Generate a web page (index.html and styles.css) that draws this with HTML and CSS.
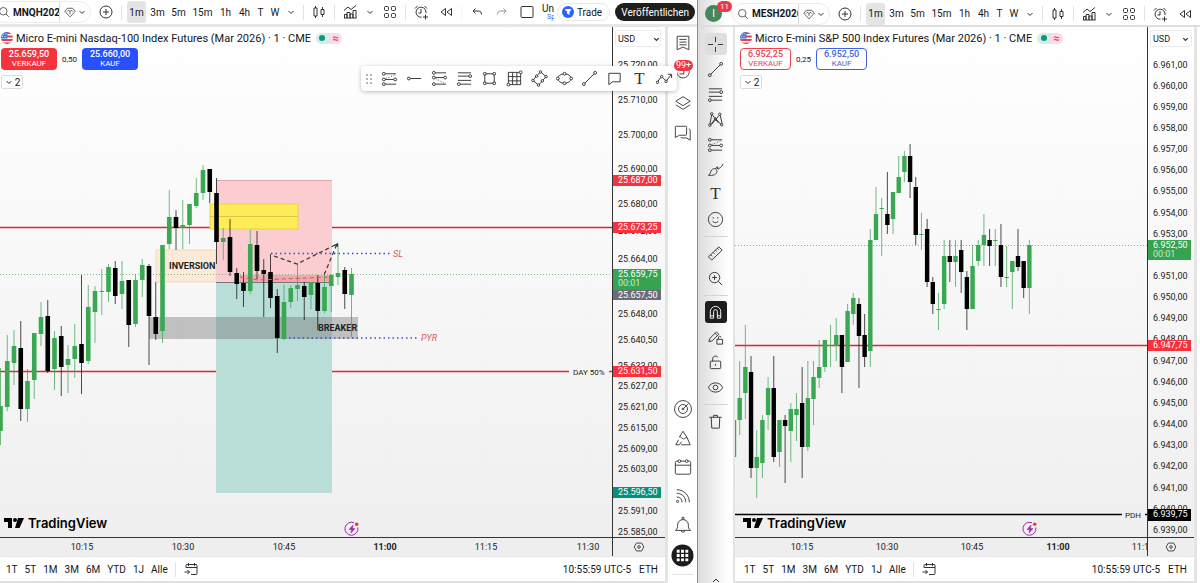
FILE: index.html
```
<!DOCTYPE html>
<html lang="de">
<head>
    <meta charset="UTF-8">
    <meta name="viewport" content="width=device-width, initial-scale=1.0">
    <title>MNQH2026 / MESH2026</title>
    <link rel="stylesheet" href="styles.css">
</head>
<body>
    <svg class="sprite" aria-hidden="true">
        <symbol id="i-search" viewBox="0 0 16 16"><circle cx="7" cy="7" r="5"/><path d="M10.5 10.5 14.500 14.500"/></symbol>
        <symbol id="i-gem" viewBox="0 0 16 16"><path d="M4.5 3h7L15 7 8 14.500 1 7zM4 7.5c1-2 3-2 4 0 1-2 3-2 4 0M8 7.5v3"/></symbol>
        <symbol id="i-chevron" viewBox="0 0 10 10"><path d="M2.500 4 5 6.500 7.500 4"/></symbol>
        <symbol id="i-plus" viewBox="0 0 16 16"><circle cx="8" cy="8" r="6"/><path d="M8 5v6M5 8h6"/></symbol>
        <symbol id="i-candles" viewBox="0 0 16 16"><path d="M4.5 2v2M4.5 12v2M3 4h3v8H3zM11.5 3v2.500M11.500 10.500V13M10 5.500h3v5h-3z"/></symbol>
        <symbol id="i-indicator" viewBox="0 0 16 16"><path d="M2 6.500 6 3l3 2.500L14 1.500M2.500 14v-3.500H5V14M5 14V8.500h3V14M8 14v-4h3v4M11 14V6.500h3V14M2 14h12.500"/></symbol>
        <symbol id="i-grid" viewBox="0 0 16 16"><rect x="2.500" y="2.500" width="4" height="4" rx="1"/><rect x="9.500" y="2.500" width="4" height="4" rx="1"/><rect x="2.500" y="9.500" width="4" height="4" rx="1"/><rect x="9.500" y="9.500" width="4" height="4" rx="1"/></symbol>
        <symbol id="i-alarm" viewBox="0 0 16 16"><path d="M13 9A5 5 0 1 0 8.500 13.200M8 5v4H5.500M2 4.500 4.500 2M11.500 2 14 4.500M12.500 10.500v5M10 13h5"/></symbol>
        <symbol id="i-rewind" viewBox="0 0 16 16"><path d="M7.500 4.500v7L3 8zM13.500 4.500v7L9 8z"/></symbol>
        <symbol id="i-undo" viewBox="0 0 16 16"><path d="M6.500 4.500 4 7l2.500 2.500M4 7h5c3 0 3.500 1.500 3.500 3.500"/></symbol>
        <symbol id="i-redo" viewBox="0 0 16 16"><path d="M9.500 4.500 12 7l-2.500 2.500M12 7H7c-3 0-3.500 1.500-3.500 3.500"/></symbol>
        <symbol id="i-square" viewBox="0 0 16 16"><rect x="2" y="2.500" width="12" height="11" rx="1"/></symbol>
        <symbol id="i-goto" viewBox="0 0 16 16"><path d="M3 6.500V4.500a1 1 0 0 1 1-1h9a1 1 0 0 1 1 1v8a1 1 0 0 1-1 1H8M3 6.500h11M5.500 2v3M11.500 2v3M1.500 11h5M4.500 9l2 2-2 2"/></symbol>
        <symbol id="i-hex" viewBox="0 0 16 16"><path d="M5 3.500h6L13.500 8 11 12.500H5L2.500 8z"/><circle cx="8" cy="8" r="1.500"/></symbol>

        <symbol id="i-line" viewBox="0 0 18 18"><path d="M4 14 14 4"/><circle cx="3" cy="15" r="1.500"/><circle cx="15" cy="3" r="1.500"/></symbol>
        <symbol id="i-hray" viewBox="0 0 18 18"><path d="M4.500 9H16"/><circle cx="3" cy="9" r="1.500"/></symbol>
        <symbol id="i-position" viewBox="0 0 18 18"><path d="M4.500 4H16M4.500 10h9M4.500 15H16"/><path stroke-dasharray="1 2" d="M5 9l10-4"/><circle cx="3" cy="4" r="1.500"/><circle cx="15" cy="10" r="1.500"/><circle cx="3" cy="10" r="1.500"/><circle cx="3" cy="15" r="1.500"/></symbol>
        <symbol id="i-forecast" viewBox="0 0 18 18"><path d="M4.500 3H16M4.500 8h9M4.500 15H16"/><path stroke-dasharray="1 2" d="M5 9l9 5"/><circle cx="3" cy="3" r="1.500"/><circle cx="3" cy="8" r="1.500"/><circle cx="15" cy="8" r="1.500"/><circle cx="3" cy="15" r="1.500"/></symbol>
        <symbol id="i-fib" viewBox="0 0 18 18"><path d="M2 3h14M2 6.500h11.500M2 11h14M4.500 15H16"/><circle cx="15" cy="6.500" r="1.500"/><circle cx="3" cy="15" r="1.500"/></symbol>
        <symbol id="i-rect" viewBox="0 0 18 18"><path d="M5 4h8M5 14h8M4 5v8M14 5v8"/><circle cx="4" cy="4" r="1.500"/><circle cx="14" cy="4" r="1.500"/><circle cx="4" cy="14" r="1.500"/><circle cx="14" cy="14" r="1.500"/></symbol>
        <symbol id="i-mesh" viewBox="0 0 18 18"><path d="M2.500 2.500h13v13h-13zM7 2.500v13M11.500 2.500v13M2.500 7h13M2.500 11.500h13"/><circle class="knob" cx="15.500" cy="2.500" r="1.500"/><circle class="knob" cx="2.500" cy="15.500" r="1.500"/></symbol>
        <symbol id="i-rotrect" viewBox="0 0 18 18"><path d="M2 11 10 2 16 7 8 16z"/><circle class="knob" cx="2" cy="11" r="1.300"/><circle class="knob" cx="10" cy="2" r="1.300"/><circle class="knob" cx="16" cy="7" r="1.300"/><circle class="knob" cx="8" cy="16" r="1.300"/><circle class="knob" cx="6" cy="6.500" r="1.300"/><circle class="knob" cx="12" cy="11.500" r="1.300"/></symbol>
        <symbol id="i-ellipse" viewBox="0 0 18 18"><ellipse cx="9" cy="9" rx="7" ry="5"/><circle class="knob" cx="2" cy="9" r="1.500"/><circle class="knob" cx="16" cy="9" r="1.500"/><circle class="knob" cx="9" cy="4" r="1.500"/><circle class="knob" cx="9" cy="14" r="1.500"/></symbol>
        <symbol id="i-callout" viewBox="0 0 18 18"><path d="M3 3.500h12v9H7l-4 3z"/></symbol>
        <symbol id="i-path" viewBox="0 0 18 18"><path d="M2 12 5 8M7 8l3 3M11.500 11 16 5M12.500 4.500H16.500V8.500"/><circle cx="1.500" cy="13" r="1.300"/><circle cx="6" cy="7" r="1.300"/><circle cx="10.700" cy="12" r="1.300"/></symbol>

        <symbol id="i-cross" viewBox="0 0 18 18"><path d="M9 1v5.500M9 11.500V17M1 9h5.500M11.500 9H17"/></symbol>
        <symbol id="i-pattern" viewBox="0 0 18 18"><path d="M3 14 5 4M6 4.500l6 8M5 14l8-9.500M14 4.500l2 9M4 14.500 8 9M10 9l5 5.500"/><circle cx="3" cy="15" r="1.300"/><circle cx="5" cy="3" r="1.300"/><circle cx="9" cy="8.500" r="1.300"/><circle cx="13.500" cy="3.500" r="1.300"/><circle cx="15.500" cy="14.500" r="1.300"/></symbol>
        <symbol id="i-brush" viewBox="0 0 18 18"><path d="M1.500 15c2 0 1.500-3 3.500-5.500s5.500-1.500 5.500 1.500-4 5-9 4zM9 8.500 11 6c0 3 4 2 6-3M10 7l2.500 2"/></symbol>
        <symbol id="i-smile" viewBox="0 0 18 18"><circle cx="9" cy="9" r="7.500"/><path d="M6 10.500c1 2.500 5 2.500 6 0M6.500 6.500v1.500M11.500 6.500v1.500"/></symbol>
        <symbol id="i-ruler" viewBox="0 0 18 18"><path d="M1.500 12.500 12.500 2l3.500 3.500L5 16zM4 10.500l1.500 1.500M6.500 8l1.500 1.500M9 5.500 10.500 7M11 3.500l1.500 1.500"/></symbol>
        <symbol id="i-zoom" viewBox="0 0 18 18"><circle cx="8" cy="8" r="5.500"/><path d="M12 12l4 4M8 5.500v5M5.500 8h5"/></symbol>
        <symbol id="i-magnet" viewBox="0 0 18 18"><path d="M3.500 15V8a5.500 5.500 0 0 1 11 0v7h-3.500V8a2 2 0 0 0-4 0v7zM3.500 12.500H7M11 12.500h3.500"/></symbol>
        <symbol id="i-penlock" viewBox="0 0 18 18"><path d="M2 13.500 3 10l7-7 2.500 2.500-7 7zM8.500 4.500 11 7M10.500 11h6v5h-6zM12 11V9.500a1.500 1.500 0 0 1 3-.5"/></symbol>
        <symbol id="i-lock" viewBox="0 0 18 18"><rect x="3.500" y="7.500" width="11" height="8" rx="1"/><path d="M6 7.500V5a3 3 0 0 1 5.500-1.500M9 10.500v2"/></symbol>
        <symbol id="i-eye" viewBox="0 0 18 18"><path d="M1.500 9C4 2.500 14 2.500 16.500 9 14 15.500 4 15.500 1.500 9z"/><circle cx="9" cy="9" r="2.500"/></symbol>
        <symbol id="i-trash" viewBox="0 0 18 18"><path d="M2.500 4.500h13M4.500 4.500l.5 11.500h8l.5-11.500M7 4.500V2.500h4v2"/></symbol>
        <symbol id="i-up" viewBox="0 0 10 10"><path d="M2 6.500 5 3.500 8 6.500"/></symbol>

        <symbol id="i-watchlist" viewBox="0 0 20 20"><path d="M3.500 2.500h13v15L10 14.500l-6.500 3zM6 6h8M6 9h8M6 12h8"/></symbol>
        <symbol id="i-clock" viewBox="0 0 20 20"><path d="M3 9a7 7 0 1 0 14-1M11 5v6H6"/></symbol>
        <symbol id="i-layers" viewBox="0 0 20 20"><path d="M10 3l8 5-8 5-8-5zM2 12l8 5 8-5"/></symbol>
        <symbol id="i-chat" viewBox="0 0 20 20"><path d="M3 2.500h10a1 1 0 0 1 1 1v8a1 1 0 0 1-1 1H6l-4.500 2.500V3.500A1 1 0 0 1 3 2.500zM16.500 5.500a1.500 1.500 0 0 1 1.500 1.500v11L14 15.500H9a1.500 1.500 0 0 1-1.500-1"/></symbol>
        <symbol id="i-radar" viewBox="0 0 20 20"><circle cx="10" cy="10" r="9.400"/><circle cx="10" cy="10" r="5"/><circle cx="10" cy="10" r="1"/><path d="M10 10l6-6"/></symbol>
        <symbol id="i-ideas" viewBox="0 0 20 20"><path d="M6 9 10 2.500 14.500 9.500M6 9c2-1 3 2 4.500 2s2-1.500 4-1.500L18 17.500H8M5 12 2 17.500h4L8.500 14"/></symbol>
        <symbol id="i-calendar" viewBox="0 0 20 20"><rect x="1.500" y="3.500" width="17" height="14.500" rx="1.500"/><path d="M1.500 8h17"/><circle class="knob" cx="6" cy="3.500" r="1.500"/><circle class="knob" cx="14" cy="3.500" r="1.500"/></symbol>
        <symbol id="i-feed" viewBox="0 0 20 20"><circle cx="4" cy="16" r="1.200"/><path d="M3 11c3.500 0 6 2.500 6 6M3 7c6 0 10 4 10 10M3 3c8 0 14 6 14 14"/></symbol>
        <symbol id="i-bell" viewBox="0 0 20 20"><path d="M1.500 16c2.500-1.500 2.500-3.500 2.500-6a6 6 0 0 1 12 0c0 2.500 0 4.500 2.500 6zM8 16a2 2 0 0 0 4 0M9 4V1.500h2V4"/></symbol>
        <symbol id="i-flag" viewBox="0 0 12 12"><clipPath id="flagclip"><circle cx="6" cy="6" r="6"/></clipPath><g clip-path="url(#flagclip)" stroke="none"><path fill="#fff" d="M0 0h12v12H0z"/><path fill="#e0434f" d="M0 0h12v2H0zM0 3.500h12v2H0zM0 7h12v2H0zM0 10.500h12V12H0z"/><path fill="#3f7fe0" d="M0 0h6.500v6.500H0z"/><path fill="#cfe0fa" d="M2 1.500h1v1H2zM4.500 1.500h1v1h-1zM1 4h1v1H1zM3.500 4h1v1h-1z"/></g></symbol>
        <symbol id="i-logo" viewBox="0 0 20 12"><path fill="#000" stroke="none" d="M0 1h8v10H4V5H0zM14 1h6l-4.500 10H11z"/><circle fill="#000" stroke="none" cx="11" cy="3" r="2"/></symbol>
        <symbol id="i-flash" viewBox="0 0 16 16"><path d="M13.800 6.500A6.500 6.500 0 1 1 10 1.800"/><path fill="#9c27b0" stroke-width=".5" d="M9 4 5 8.500h2.500L7 12l4-4.500H8.500z"/><circle fill="#f23645" stroke="none" cx="12.700" cy="3.300" r="1.800"/></symbol>
    </svg>

    <div class="desktop">
        <!-- Nasdaq window -->
        <section class="window window-nq">
            <header class="topbar">
                <div class="symbol-search">
                    <button class="symbol"><svg><use href="#i-search"/></svg><span>MNQH2026</span></button>
                    <button class="symbol-menu" aria-label="Symbolliste"><svg><use href="#i-gem"/></svg><svg class="chev"><use href="#i-chevron"/></svg></button>
                </div>
                <button class="icon-btn" aria-label="Vergleichen"><svg><use href="#i-plus"/></svg></button>
                <span class="divider"></span>
                <nav class="intervals">
                    <button class="active">1m</button><button>3m</button><button>5m</button><button class="wide">15m</button><button class="hour">1h</button><button class="hour">4h</button><button class="day">T</button><button class="week">W</button>
                    <button class="week" aria-label="Mehr Intervalle"><svg class="chev"><use href="#i-chevron"/></svg></button>
                </nav>
                <span class="divider"></span>
                <button class="icon-btn" aria-label="Charttyp"><svg><use href="#i-candles"/></svg></button>
                <span class="divider"></span>
                <button class="icon-btn" aria-label="Indikatoren"><svg><use href="#i-indicator"/></svg></button>
                <button class="chev-btn" aria-label="Favoriten"><svg class="chev"><use href="#i-chevron"/></svg></button>
                <button class="icon-btn" aria-label="Vorlagen"><svg><use href="#i-grid"/></svg></button>
                <span class="divider"></span>
                <button class="icon-btn" aria-label="Alarm"><svg><use href="#i-alarm"/></svg></button>
                <button class="icon-btn" aria-label="Replay"><svg><use href="#i-rewind"/></svg></button>
                <span class="divider faint"></span>
                <button class="icon-btn" aria-label="Rückgängig"><svg><use href="#i-undo"/></svg></button>
                <button class="icon-btn muted" aria-label="Wiederholen"><svg><use href="#i-redo"/></svg></button>
                <button class="icon-btn" aria-label="Layout"><svg><use href="#i-square"/></svg></button>
                <button class="layout-name"><span>Unbenannt</span><small>Speichern</small></button>
                <button class="trade"><svg viewBox="0 0 12 12"><circle cx="6" cy="6" r="6" fill="#2962ff"/><path fill="#fff" d="M2.500 3.500 5 3h4.500L8 5.500H7.500V9L5 7.500V5.500z"/></svg>Trade</button>
                <button class="publish">Veröffentlichen</button>
            </header>

            <div class="workspace">
                <div class="chart-pane">
                    <div class="chart">
                        <svg class="plot" id="plot-nq"></svg>
                        <div class="legend">
                            <div class="title"><svg class="flag"><use href="#i-flag"/></svg><span>Micro E-mini Nasdaq-100 Index Futures (Mar 2026) · 1 · CME</span><span class="status"><i></i><b>≈</b></span></div>
                            <div class="orders">
                                <button class="order sell solid"><b>25.659,50</b>VERKAUF</button>
                                <span>0,50</span>
                                <button class="order buy solid"><b>25.660,00</b>KAUF</button>
                            </div>
                            <button class="collapse"><svg class="chev"><use href="#i-chevron"/></svg>2</button>
                        </div>
                        <div class="brand"><svg><use href="#i-logo"/></svg>TradingView</div>
                        <svg class="flash"><use href="#i-flash"/></svg>
                    </div>
                    <div class="scale">
                        <svg class="plot" id="scale-nq"></svg>
                        <select class="currency" aria-label="Währung"><option>USD</option></select>
                        <svg class="chev select-chev"><use href="#i-chevron"/></svg>
                    </div>
                    <svg class="time" id="time-nq"></svg>
                    <div class="corner"><button aria-label="Einstellungen"><svg><use href="#i-hex"/></svg></button></div>
                    <footer class="ranges">
                        <button>1T</button><button>5T</button><button>1M</button><button>3M</button><button>6M</button><button>YTD</button><button>1J</button><button>Alle</button>
                        <span class="divider"></span>
                        <button aria-label="Gehe zu"><svg><use href="#i-goto"/></svg></button>
                        <button class="clock">10:55:59 UTC-5</button>
                        <button>ETH</button>
                    </footer>
                </div>
                <aside class="sidebar">
                    <button aria-label="Watchlist"><svg><use href="#i-watchlist"/></svg></button>
                    <button class="alerts" aria-label="Alarme"><svg><use href="#i-clock"/></svg><span class="badge">99+</span></button>
                    <button aria-label="Objektbaum"><svg><use href="#i-layers"/></svg></button>
                    <button aria-label="Chats"><svg><use href="#i-chat"/></svg></button>
                    <button class="push" aria-label="Screener"><svg><use href="#i-radar"/></svg></button>
                    <button aria-label="Ideen"><svg><use href="#i-ideas"/></svg></button>
                    <button aria-label="Kalender"><svg><use href="#i-calendar"/></svg></button>
                    <button aria-label="News"><svg><use href="#i-feed"/></svg></button>
                    <button aria-label="Mitteilungen"><svg><use href="#i-bell"/></svg></button>
                    <button class="apps" aria-label="Produkte"><svg viewBox="0 0 24 24"><circle cx="12" cy="12" r="11.500" fill="#1c1c1c" stroke="none"/><path fill="#fff" stroke="none" d="M6 6h3v3H6zM10.500 6h3v3h-3zM15 6h3v3h-3zM6 10.500h3v3H6zM10.500 10.500h3v3h-3zM15 10.500h3v3h-3zM6 15h3v3H6zM10.500 15h3v3h-3zM15 15h3v3h-3z"/></svg></button>
                    <hr>
                </aside>
            </div>

            <div class="drawbar">
                <svg class="grip" viewBox="0 0 6 10"><path stroke="none" fill="#b5b5b5" d="M0 0h2v2H0zM4 0h2v2H4zM0 4h2v2H0zM4 4h2v2H4zM0 8h2v2H0zM4 8h2v2H4z"/></svg>
                <button aria-label="Long-Position"><svg><use href="#i-position"/></svg></button>
                <button aria-label="Horizontaler Strahl"><svg><use href="#i-hray"/></svg></button>
                <button aria-label="Short-Position"><svg><use href="#i-forecast"/></svg></button>
                <button aria-label="Fibonacci"><svg><use href="#i-fib"/></svg></button>
                <button aria-label="Rechteck"><svg><use href="#i-rect"/></svg></button>
                <button aria-label="Gann-Box"><svg><use href="#i-mesh"/></svg></button>
                <button aria-label="Gedrehtes Rechteck"><svg><use href="#i-rotrect"/></svg></button>
                <button aria-label="Ellipse"><svg><use href="#i-ellipse"/></svg></button>
                <button aria-label="Trendlinie"><svg><use href="#i-line"/></svg></button>
                <button aria-label="Callout"><svg><use href="#i-callout"/></svg></button>
                <button class="text-tool">T</button>
                <button aria-label="Pfad"><svg><use href="#i-path"/></svg></button>
            </div>
        </section>

        <!-- S&P window -->
        <section class="window window-es">
            <header class="topbar">
                <button class="avatar">I<span class="badge">11</span></button>
                <div class="symbol-search">
                    <button class="symbol"><svg><use href="#i-search"/></svg><span>MESH2026</span></button>
                    <button class="symbol-menu" aria-label="Symbolliste"><svg><use href="#i-gem"/></svg><svg class="chev"><use href="#i-chevron"/></svg></button>
                </div>
                <button class="icon-btn" aria-label="Vergleichen"><svg><use href="#i-plus"/></svg></button>
                <span class="divider"></span>
                <nav class="intervals">
                    <button class="active">1m</button><button>3m</button><button>5m</button><button class="wide">15m</button><button class="hour">1h</button><button class="hour">4h</button><button class="day">T</button><button class="week">W</button>
                    <button class="week" aria-label="Mehr Intervalle"><svg class="chev"><use href="#i-chevron"/></svg></button>
                </nav>
                <span class="divider"></span>
                <button class="icon-btn" aria-label="Charttyp"><svg><use href="#i-candles"/></svg></button>
                <span class="divider"></span>
                <button class="icon-btn" aria-label="Indikatoren"><svg><use href="#i-indicator"/></svg></button>
                <button class="chev-btn" aria-label="Favoriten"><svg class="chev"><use href="#i-chevron"/></svg></button>
                <button class="icon-btn" aria-label="Vorlagen"><svg><use href="#i-grid"/></svg></button>
                <span class="divider"></span>
                <button class="icon-btn" aria-label="Alarm"><svg><use href="#i-alarm"/></svg></button>
                <button class="icon-btn" aria-label="Replay"><svg><use href="#i-rewind"/></svg></button>
            </header>

            <div class="workspace">
                <aside class="tools">
                    <button class="selected" aria-label="Fadenkreuz"><svg><use href="#i-cross"/></svg></button>
                    <button aria-label="Trendlinie"><svg><use href="#i-line"/></svg></button>
                    <button aria-label="Fibonacci"><svg><use href="#i-fib"/></svg></button>
                    <button aria-label="Muster"><svg><use href="#i-pattern"/></svg></button>
                    <button aria-label="Prognose"><svg><use href="#i-position"/></svg></button>
                    <button aria-label="Pinsel"><svg><use href="#i-brush"/></svg></button>
                    <button class="text-tool">T</button>
                    <button aria-label="Symbole"><svg><use href="#i-smile"/></svg></button>
                    <hr>
                    <button aria-label="Messen"><svg><use href="#i-ruler"/></svg></button>
                    <button aria-label="Vergrößern"><svg><use href="#i-zoom"/></svg></button>
                    <hr>
                    <button class="on" aria-label="Magnet"><svg><use href="#i-magnet"/></svg></button>
                    <button aria-label="Zeichenmodus"><svg><use href="#i-penlock"/></svg></button>
                    <button aria-label="Sperren"><svg><use href="#i-lock"/></svg></button>
                    <button aria-label="Ausblenden"><svg><use href="#i-eye"/></svg></button>
                    <hr>
                    <button aria-label="Löschen"><svg><use href="#i-trash"/></svg></button>
                    <button class="more" aria-label="Favoritenleiste"><svg><use href="#i-up"/></svg></button>
                </aside>
                <div class="chart-pane">
                    <div class="chart">
                        <svg class="plot" id="plot-es"></svg>
                        <div class="legend">
                            <div class="title"><svg class="flag"><use href="#i-flag"/></svg><span>Micro E-mini S&amp;P 500 Index Futures (Mar 2026) · 1 · CME</span><span class="status"><i></i><b>≈</b></span></div>
                            <div class="orders">
                                <button class="order sell"><b>6.952,25</b>VERKAUF</button>
                                <span>0,25</span>
                                <button class="order buy"><b>6.952,50</b>KAUF</button>
                            </div>
                            <button class="collapse"><svg class="chev"><use href="#i-chevron"/></svg>2</button>
                        </div>
                        <div class="brand"><svg><use href="#i-logo"/></svg>TradingView</div>
                        <svg class="flash"><use href="#i-flash"/></svg>
                    </div>
                    <div class="scale">
                        <svg class="plot" id="scale-es"></svg>
                        <select class="currency" aria-label="Währung"><option>USD</option></select>
                        <svg class="chev select-chev"><use href="#i-chevron"/></svg>
                    </div>
                    <svg class="time" id="time-es"></svg>
                    <div class="corner"><button aria-label="Einstellungen"><svg><use href="#i-hex"/></svg></button></div>
                    <footer class="ranges">
                        <button>1T</button><button>5T</button><button>1M</button><button>3M</button><button>6M</button><button>YTD</button><button>1J</button><button>Alle</button>
                        <span class="divider"></span>
                        <button aria-label="Gehe zu"><svg><use href="#i-goto"/></svg></button>
                        <button class="clock">10:55:59 UTC-5</button>
                        <button>ETH</button>
                    </footer>
                </div>
            </div>
        </section>
    </div>

    <script src="charts.js"></script>
</body>
</html>
```

FILE: styles.css
```
* {
    box-sizing: border-box;
}

body {
    margin: 0;
    font-family: Roboto, "Liberation Sans", sans-serif;
    font-size: 10px;
    color: #131722;
    background-color: #e4e4e4;
}

button {
    display: flex;
    align-items: center;
    justify-content: center;
    padding: 0;
    border: none;
    background: none;
    font: inherit;
    color: inherit;
    white-space: nowrap;
    cursor: pointer;
}

svg {
    display: block;
    flex: none;
    width: 16px;
    height: 16px;
    fill: none;
    stroke: #333;
    stroke-width: 1;
}

svg text {
    stroke: none;
    fill: #222;
}

.sprite {
    position: absolute;
    width: 0;
    height: 0;
}

.chev {
    width: 10px;
    height: 10px;
}

.knob {
    fill: #fff;
}

.desktop {
    display: grid;
    grid-template-columns: 697fr 503fr;
    height: 100vh;
    overflow: hidden;
}

.window {
    position: relative;
    display: flex;
    flex-direction: column;
    min-width: 0;
    overflow: hidden;
    background-color: #fff;
}

.window-es {
    border-left: 1px solid #8c8c8c;
    padding-right: 3px;
    background: linear-gradient(90deg, #dcdcdc 0, #fff 30px);
}

/* top bar */
.topbar {
    display: flex;
    align-items: center;
    gap: 5px;
    height: 27px;
    flex: none;
    border-bottom: 3px solid #e6e6e6;
}

.window-es .topbar {
    margin-right: -3px;
    padding-top: 2px;
    border-bottom-width: 2px;
    border-bottom-color: #dedede;
}

.symbol-search {
    display: flex;
    height: 22px;
    width: 98px;
    flex: none;
    border: 1px solid #ececec;
    border-radius: 11px;
}

.window-nq .symbol-search {
    margin-left: -7px;
}

.window-es .symbol-search {
    margin-left: -6px;
}

.symbol {
    width: 66px;
    padding-left: 4px;
    justify-content: flex-start;
    gap: 3px;
    overflow: hidden;
    font-weight: 700;
    border-right: 1px solid #d8d8d8;
}

.symbol svg {
    width: 12px;
    height: 12px;
}

.symbol-menu {
    flex: 1;
    gap: 1px;
}

.symbol-menu svg:first-child {
    width: 12px;
    height: 12px;
}

.icon-btn {
    width: 20px;
    height: 20px;
    flex: none;
}

.muted {
    opacity: .5;
}

.chev-btn {
    width: 10px;
}

.divider {
    width: 1px;
    height: 15px;
    flex: none;
    background-color: #e2e2e2;
}

.faint {
    background-color: #f5f5f5;
}

.intervals {
    display: flex;
    gap: 2px;
}

.intervals button {
    width: 19px;
    height: 22px;
    border-radius: 3px;
}

.intervals .wide {
    width: 25px;
}

.intervals .hour {
    width: 17px;
}

.intervals .day {
    width: 11px;
}

.intervals .week {
    width: 14px;
}

.intervals .active {
    background-color: #e4e4e4;
}

.layout-name {
    flex-direction: column;
    align-items: flex-start;
    width: 12px;
    flex: none;
    overflow: hidden;
}

.layout-name small {
    padding-left: 5px;
    font-size: 7px;
    line-height: 7px;
    color: #2962ff;
}

.trade {
    gap: 3px;
    height: 18px;
    padding: 0 7px 0 4px;
    margin-left: -2px;
    border: 1px solid #e8e8e8;
    border-radius: 9px;
}

.trade svg {
    width: 12px;
    height: 12px;
    stroke: none;
}

.publish {
    height: 18px;
    width: 80px;
    flex: none;
    margin: 0 4px 0 auto;
    border-radius: 9px;
    background-color: #1e1e1e;
    color: #fff;
}

.badge {
    position: absolute;
    height: 11px;
    padding: 0 3px;
    border-radius: 6px;
    background-color: #f23645;
    color: #fff;
    font-size: 8px;
    line-height: 11px;
}

.avatar {
    position: relative;
    width: 17px;
    height: 17px;
    flex: none;
    margin: 0 11px 0 7px;
    border-radius: 50%;
    background-color: #43875c;
    color: #fff;
}

.avatar .badge {
    left: 12px;
    top: -4px;
}

/* chart area */
.workspace {
    display: flex;
    flex: 1;
    min-height: 0;
}

.chart-pane {
    display: grid;
    grid-template-columns: 1fr 53px;
    grid-template-rows: 1fr 18px 27px;
    flex: 1;
    min-width: 0;
    border-right: 3px solid #e4e4e4;
    background: linear-gradient(#fff, #eee);
}

.window-es .chart-pane {
    grid-template-columns: 1fr 47px;
    border-left: 2px solid #e4e4e4;
}

.chart {
    position: relative;
    overflow: hidden;
    border-bottom: 1px solid #333;
}

.plot {
    position: absolute;
    width: 100%;
    height: 100%;
    font-size: 9px;
    stroke: none;
}

.scale {
    position: relative;
    border-left: 1px solid #333;
    border-bottom: 1px solid #333;
}

.currency {
    position: absolute;
    top: 3px;
    left: 2px;
    height: 17px;
    width: 46px;
    padding: 0 2px;
    appearance: none;
    border: 1px solid #ebebeb;
    border-radius: 2px;
    background-color: #fff;
    font: inherit;
    font-size: 9px;
    color: #222;
}

.window-es .currency {
    width: 42px;
}

.select-chev {
    position: absolute;
    top: 7px;
    right: 4px;
    width: 9px;
    stroke-width: 1.4;
    pointer-events: none;
}

.time {
    width: 100%;
    height: 18px;
    font-size: 9px;
    background-color: #eee;
}

.corner {
    display: flex;
    justify-content: center;
    border-left: 1px solid #333;
    background-color: #eee;
}

.corner svg {
    width: 14px;
    height: 14px;
}

.legend {
    position: relative;
    display: flex;
    flex-direction: column;
    align-items: flex-start;
    padding: 3px 1px;
}

.window-es .legend {
    padding-left: 5px;
}

.title {
    display: flex;
    align-items: center;
    gap: 3px;
    height: 16px;
    font-size: 11px;
    white-space: nowrap;
}

.flag {
    width: 12px;
    height: 12px;
}

.status {
    display: flex;
    align-items: center;
    justify-content: space-around;
    width: 26px;
    height: 11px;
    margin-left: 2px;
    border-radius: 6px;
    background: linear-gradient(90deg, #d5ece8 50%, #fbdbe6 50%);
}

.status i {
    width: 6px;
    height: 6px;
    border-radius: 50%;
    background-color: #089981;
}

.status b {
    font-size: 11px;
    line-height: 11px;
    color: #e0407b;
}

.orders {
    display: flex;
    align-items: center;
    gap: 5px;
    margin-top: 2px;
    font-size: 8px;
}

.order {
    flex-direction: column;
    width: 51px;
    height: 22px;
    border: 1px solid currentColor;
    border-radius: 4px;
    line-height: 9px;
    background-color: #fff;
}

.order b {
    font-size: 9px;
    font-weight: 500;
}

.sell {
    color: #e8414f;
}

.buy {
    color: #3f63e0;
}

.order.solid {
    width: 56px;
    color: #fff;
    border: none;
}

.sell.solid {
    background-color: #f7323f;
}

.buy.solid {
    background-color: #2950ff;
}

.collapse {
    gap: 1px;
    width: 22px;
    height: 14px;
    margin-top: 5px;
    border: 1px solid #dcdcdc;
    border-radius: 2px;
    background-color: #fff;
}

.brand {
    position: absolute;
    left: 4px;
    bottom: 5px;
    display: flex;
    align-items: center;
    gap: 4px;
    font-family: Inter, sans-serif;
    font-size: 13px;
    font-weight: 600;
    line-height: 18px;
    color: #000;
}

.window-es .brand {
    left: 8px;
}

.brand svg {
    width: 20px;
    height: 12px;
}

.flash {
    position: absolute;
    left: 344px;
    bottom: 0;
    stroke: #9c27b0;
}

.window-es .flash {
    left: 287px;
}

.ranges {
    grid-column: 1 / 3;
    display: flex;
    align-items: center;
    gap: 7px;
    padding: 0 7px 0 6px;
    border-top: 1px solid #e6e6e6;
    border-bottom: 2px solid #e0e0e0;
    background-color: #fff;
}

.window-es .ranges {
    padding: 0 7px 0 9px;
}

.clock {
    margin: 0 1px 0 auto;
}

/* right sidebar */
.sidebar {
    display: flex;
    flex-direction: column;
    width: 29px;
    flex: none;
    padding-top: 1px;
    background-color: #fff;
}

.sidebar button {
    position: relative;
    height: 30px;
}

.sidebar .push {
    margin-top: auto;
}

.sidebar .push,
.sidebar .push ~ button {
    height: 29px;
}

.sidebar svg {
    width: 18px;
    height: 18px;
}

.sidebar .push ~ .apps {
    height: 33px;
}

.sidebar .apps svg {
    width: 23px;
    height: 23px;
}

.sidebar hr {
    width: 22px;
    margin: 2px auto 8px;
    border: none;
    border-top: 1px solid #e4e4e4;
}

.alerts .badge {
    top: 2px;
    left: 6px;
    z-index: 3;
    padding: 0 2px;
    font-size: 9px;
}

/* left drawing tools */
.tools {
    display: flex;
    flex-direction: column;
    align-items: center;
    width: 35px;
    flex: none;
    padding-top: 6px;
}

.tools button {
    width: 22px;
    height: 22px;
    flex: none;
    margin-bottom: 3px;
    border-radius: 3px;
}

.tools svg {
    width: 17px;
    height: 17px;
}

.tools .selected {
    background-color: #dedede;
}

.tools .on {
    background-color: #1e1e1e;
}

.tools .on svg {
    stroke: #fff;
}

.tools hr {
    width: 24px;
    margin: 3px 0 5px;
    border: none;
    border-top: 1px solid #d4d4d4;
}

.tools .more {
    margin: auto 0 -8px;
}

.tools .more svg {
    width: 10px;
}

/* floating favourites */
.drawbar {
    position: absolute;
    top: 66px;
    right: 20px;
    z-index: 2;
    display: flex;
    align-items: center;
    width: 316px;
    height: 25px;
    padding-left: 5px;
    border-radius: 4px;
    background-color: #fff;
    box-shadow: 0 1px 4px rgba(0, 0, 0, .25);
}

.drawbar button {
    width: 25px;
    height: 25px;
}

.drawbar svg {
    width: 17px;
    height: 17px;
}

.drawbar .grip {
    width: 6px;
    height: 10px;
    margin-right: 5px;
}

.text-tool {
    font-family: "Liberation Serif", serif;
    font-size: 17px;
    color: #333;
}
```

FILE: charts.js
```
const NS = "http://www.w3.org/2000/svg";
const TOP = 27; // height of the top bar, all y values count from the window's top

// [colour, high, body top, body bottom, low]
const nqBars = [
    ["g",368,406,431,445],["g",335,361,407,411],["g",330,346,363,385],["k",321,348,409,421],
    ["g",369,381,409,422],["g",333,333,380,399],["g",302,317,334,346],["k",300,316,371,373],
    ["g",331,338,369,390],["k",326,336,367,396],["g",345,359,365,393],["g",324,346,359,378],
    ["k",275,344,363,394],["g",285,307,361,364],["g",286,291,312,343],["g",269,291,292,315],
    ["g",264,267,292,302],["k",261,268,296,304],["g",261,281,294,309],["k",280,280,325,347],
    ["g",274,280,324,327],["g",259,265,280,297],["k",264,266,316,365],["k",282,317,334,340],
    ["g",245,245,331,343],["g",190,217,244,249],["k",210,217,228,250],["g",200,225,228,249],
    ["g",204,204,225,244],["g",178,193,206,208],["g",165,170,193,200],["k",169,169,192,203],
    ["k",178,193,242,264],["g",228,238,242,260],["k",219,237,272,276],["k",268,273,284,299],
    ["k",272,283,291,307],["g",230,244,291,294],["k",231,245,271,279],["k",259,270,274,317],
    ["k",254,272,298,308],["k",289,296,338,353],["g",285,302,339,340],["g",285,288,302,308],
    ["g",263,285,289,301],["k",282,286,297,320],["g",282,282,295,309],["k",275,283,311,330],
    ["g",272,287,311,313],["g",274,275,286,312],["g",243,273,277,285],["k",267,270,294,309],
    ["g",268,274,295,337]
];

const esBars = [
    ["g",420,420,457,457],["g",361,398,420,435],["g",325,367,393,419],["k",356,372,468,478],
    ["g",430,457,468,498],["g",415,420,463,478],["g",377,388,415,430],["k",356,388,457,462],
    ["g",420,420,452,467],["k",415,420,426,483],["g",403,409,431,462],["g",393,409,415,441],
    ["k",367,403,447,478],["g",361,398,447,451],["g",361,377,399,425],["g",340,367,378,388],
    ["g",340,340,367,372],["g",325,345,346,367],["g",318,335,346,361],["k",335,335,367,393],
    ["g",304,311,362,362],["g",293,298,314,325],["k",298,304,336,388],["k",314,335,357,367],
    ["g",229,240,351,367],["g",187,214,240,240],["g",198,208,209,256],["k",172,214,225,234],
    ["g",192,192,219,234],["g",156,177,193,193],["g",151,156,172,182],["k",144,156,182,198],
    ["k",177,187,235,245],["g",213,234,235,250],["k",219,229,282,287],["k",277,282,304,314],
    ["g",293,309,310,330],["g",240,256,304,309],["k",240,256,262,282],["g",240,256,262,287],
    ["k",240,250,272,293],["k",271,277,309,330],["g",245,266,309,309],["g",240,245,261,266],
    ["g",214,235,245,266],["k",229,240,246,266],["g",229,240,241,266],["k",224,245,277,287],
    ["g",246,277,278,287],["g",261,261,272,309],["k",229,256,267,271],["k",261,261,288,298],
    ["g",240,245,288,314]
];

function add(parent, tag, attrs, text) {
    const el = document.createElementNS(NS, tag);
    for (const key in attrs) el.setAttribute(key, attrs[key]);
    if (text) el.textContent = text;
    parent.appendChild(el);
    return el;
}

function layer(id) {
    return add(document.getElementById(id), "g", { transform: `translate(0 ${-TOP})` });
}

function box(g, x, y, w, h, fill, stroke) {
    add(g, "rect", { x, y, width: w, height: h, fill, stroke: stroke || "none" });
}

function line(g, x1, x2, y, color, width, dash) {
    add(g, "line", { x1, x2, y1: y, y2: y, stroke: color, "stroke-width": width, "stroke-dasharray": dash || "none" });
}

function label(g, x, y, text, extra) {
    add(g, "text", Object.assign({ x, y: y + 3 }, extra), text);
}

function candles(g, bars, start, step, width) {
    bars.forEach(([c, high, top, bottom, low], i) => {
        const x = start + i * step;
        add(g, "line", { x1: x, x2: x, y1: high, y2: low, stroke: c === "g" ? "#34a04f" : "#000", "stroke-width": 1, opacity: .7 });
        box(g, x - width / 2, top, width, Math.max(bottom - top, 1), c === "g" ? "#3aa852" : "#000");
    });
}

function grid(g, xs, ys) {
    xs.forEach(x => add(g, "line", { x1: x, x2: x, y1: 27, y2: 537, stroke: "#000", opacity: .01 }));
    ys.forEach(y => line(g, 0, "100%", y, "rgba(0,0,0,.01)", 1));
}

function tag(g, y, height, width, color, lines) {
    box(g, 0, y, width, height, color);
    lines.forEach((t, i) => label(g, 5, y + 5 + i * 9, t, { style: `fill:#fff;fill-opacity:${i ? .75 : 1}` }));
}

// Nasdaq
const nq = layer("plot-nq");
const nqLabels = [["25.720,00",65],["25.710,00",100],["25.700,00",135],["25.690,00",169],["25.680,00",204],["25.672,00",231],["25.664,00",259],["25.648,00",314],["25.640,50",340],["25.633,00",366],["25.627,00",386],["25.621,00",407],["25.615,00",428],["25.609,00",449],["25.603,00",469],["25.591,00",511],["25.585,00",532]];
grid(nq, [82, 183, 284, 385, 486, 588], nqLabels.map(l => l[1]));
line(nq, 0, "100%", 227.5, "#e0262f", 1.5);
line(nq, 0, 569, 371.5, "#e0262f", 1.5);
line(nq, 609, 612, 371.5, "#e0262f", 1.5);
box(nq, 216, 180, 116, 102, "#fbccd0");
line(nq, 216, 332, 180.5, "#d9a9ad", 1);
box(nq, 240, 275, 92, 7, "#f7a4aa");
box(nq, 216, 282, 116, 211, "#b9ded7");
box(nq, 156, 250, 60, 32, "#fbead7", "#f3d9bb");
box(nq, 149, 317, 209, 22, "rgba(100,100,100,.37)");
line(nq, 216, 332, 282.5, "#777", 1);
box(nq, 210, 204, 88, 25, "#ffed58", "#e5d34d");
line(nq, 210, 298, 216.5, "#d9c850", 1);
line(nq, 0, "100%", 274.5, "#7dbb8a", 1, "1 2");
line(nq, 271, 391, 253.5, "#3949d6", 1.5, "1.5 3");
line(nq, 289, 417, 338, "#3949d6", 1.5, "1.5 3");
candles(nq, nqBars, .5, 6.75, 4.6);
add(nq, "path", { d: "M274 256 297 264 337 244 324 275", fill: "none", stroke: "#333", "stroke-width": 1.2, "stroke-dasharray": "4 3" });
add(nq, "path", { d: "M240 277 258 280 330 277", fill: "none", stroke: "#a66", "stroke-width": 1, "stroke-dasharray": "4 3" });
add(nq, "path", { d: "M334 245 338 243 338 247z", fill: "#333" });
label(nq, 169, 266, "INVERSION", { "font-weight": 700 });
label(nq, 318, 328, "BREAKER", { "font-weight": 700 });
label(nq, 393, 254, "SL", { style: "fill:#e05560;font-style:italic" });
label(nq, 421, 338, "PYR", { style: "fill:#e05560;font-style:italic" });
label(nq, 573, 372, "DAY 50%", { "font-size": 8 });

const nqScale = layer("scale-nq");
nqLabels.forEach(l => label(nqScale, 5, l[1], l[0]));
tag(nqScale, 175, 11, 48, "#f7323f", ["25.687,00"]);
tag(nqScale, 222, 11, 48, "#f7323f", ["25.673,25"]);
tag(nqScale, 269, 21, 48, "#35a34f", ["25.659,75", "00:01"]);
tag(nqScale, 290, 10, 48, "#6a6d78", ["25.657,50"]);
tag(nqScale, 366, 11, 48, "#f7323f", ["25.631,50"]);
tag(nqScale, 487, 11, 48, "#089078", ["25.596,50"]);

// S&P
const es = layer("plot-es");
const esLabels = [];
for (let i = 0; i < 23; i++) {
    if (i === 9) continue; // sits behind the last price
    esLabels.push([`6.${961 - i},00`, Math.round(64.5 + i * 21.15)]);
}
grid(es, [67, 152, 238, 323, 408], esLabels.map(l => l[1]));
line(es, 0, "100%", 345.5, "#e0262f", 1.5);
line(es, 0, "100%", 245.5, "#7dbb8a", 1, "1 2");
line(es, 0, 387, 514.5, "#000", 1.5);
line(es, 410, 412, 514.5, "#000", 1.5);
candles(es, esBars, -1, 5.68, 4.4);
label(es, 390, 515, "PDH", { "font-size": 8 });

const esScale = layer("scale-es");
esLabels.forEach(l => label(esScale, 5, l[1], l[0]));
tag(esScale, 240, 20, 43, "#35a34f", ["6.952,50", "00:01"]);
tag(esScale, 340, 11, 43, "#f7323f", ["6.947,75"]);
tag(esScale, 509, 12, 43, "#000", ["6.939,75"]);

// time scales
function times(id, marks) {
    const svg = document.getElementById(id);
    marks.forEach(([x, t]) => label(svg, x, 9, t, { "text-anchor": "middle", "font-weight": t === "11:00" ? 700 : 400 }));
}
times("time-nq", [[82, "10:15"], [183, "10:30"], [284, "10:45"], [385, "11:00"], [486, "11:15"], [588, "11:30"]]);
times("time-es", [[67, "10:15"], [152, "10:30"], [237, "10:45"], [323, "11:00"], [408, "11:15"]]);
```
